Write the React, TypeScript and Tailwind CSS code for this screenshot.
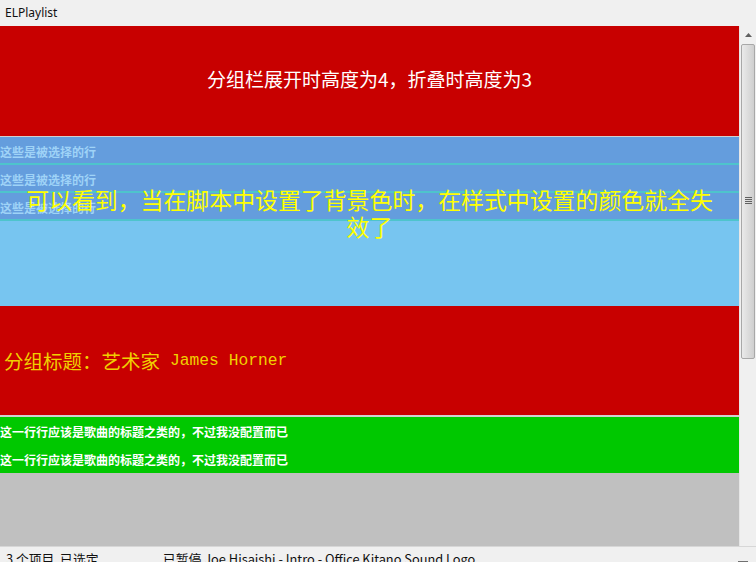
import React from "react";

const cjk = { fontFamily: '"Noto Sans CJK SC", "Noto Sans", sans-serif' };

export default function App() {
  return (
    <div className="w-[756px] h-[562px] overflow-hidden bg-[#f0f0f0] flex flex-col" style={{ fontFamily: '"Noto Sans", "Noto Sans CJK SC", sans-serif' }}>
      {/* title bar */}
      <div className="h-[26px] shrink-0 flex items-center pl-[5px] text-[12px] text-[#101010]">ELPlaylist</div>

      {/* body */}
      <div className="flex h-[520px] shrink-0">
        <div className="relative w-[739px] flex flex-col bg-[#c0c0c0]">
          {/* group header 1 */}
          <div className="h-[110px] bg-[#c80000] flex items-center justify-center text-white text-[19px] pb-[3px]" style={cjk}>
            分组栏展开时高度为4，折叠时高度为3
          </div>
          <div className="h-px bg-[#d0d0d0]" />
          {[0, 1, 2].map((i) => (
            <div key={i} className="h-[28px] bg-[#649ddd] border-b-2 border-[#4ec4cc] flex items-center pt-[3px] text-[12px] font-bold text-[#9fd3f7] leading-none" style={cjk}>
              这些是被选择的行
            </div>
          ))}
          <div className="h-[85px] bg-[#77c5f0]" />
          {/* group header 2 */}
          <div className="h-[109px] bg-[#c80000] flex items-center pl-[4px] pt-[1px] text-[#f0d000] text-[19.5px]" style={cjk}>
            <span>分组标题：艺术家</span>
            <span className="pl-[10px] text-[16.3px]" style={{ fontFamily: '"Liberation Mono", monospace' }}>James Horner</span>
          </div>
          <div className="h-[2px] bg-[#d0d0d0]" />
          {[0, 1].map((i) => (
            <div key={i} className="h-[28px] bg-[#00c800] flex items-center pt-px text-[12px] font-bold text-white leading-none" style={cjk}>
              这一行行应该是歌曲的标题之类的，不过我没配置而已
            </div>
          ))}
          <div className="flex-1 bg-[#c0c0c0]" />

          {/* overlay text */}
          <div className="absolute left-0 top-[160px] w-[739px] text-center text-[#ffff00] text-[22.9px] leading-[27px]" style={cjk}>
            可以看到，当在脚本中设置了背景色时，在样式中设置的颜色就全失
            <br />
            效了
          </div>
        </div>

        {/* scrollbar */}
        <div className="w-[17px] bg-[#f0f0f0] border-l border-[#e6e6e6] flex flex-col items-center">
          <div className="h-[17px] w-full flex items-center justify-center">
            <svg width="7" height="4" viewBox="0 0 7 4">
              <path d="M3.5 0 L7 4 L0 4 Z" fill="#606060" />
            </svg>
          </div>
          <div className="mt-px w-[14px] h-[315px] rounded-[2px] border border-[#a8a8a8] bg-gradient-to-r from-[#eaeaea] via-[#dcdcdc] to-[#cfcfcf] flex items-center justify-center">
            <div className="flex flex-col gap-[1px] mt-[-2px]">
              <div className="w-[7px] h-px bg-[#606060]" />
              <div className="w-[7px] h-px bg-[#606060]" />
              <div className="w-[7px] h-px bg-[#606060]" />
              <div className="w-[7px] h-px bg-[#606060]" />
            </div>
          </div>
        </div>
      </div>

      {/* status bar */}
      <div className="relative h-[22px] shrink-0 border-t border-[#d7d7d7] bg-[#f0f0f0] flex items-start pt-[4px] text-[12.8px] text-[#101010] leading-[16px]" style={cjk}>
        <span className="pl-[6px] w-[163px]">3 个项目&nbsp;&nbsp;已选定</span>
        <span>已暂停 Joe Hisaishi - Intro - Office Kitano Sound Logo</span>
        <div className="absolute right-[8px] top-[14px] w-[10px] h-[2px] bg-[#707070]" />
      </div>
    </div>
  );
}
